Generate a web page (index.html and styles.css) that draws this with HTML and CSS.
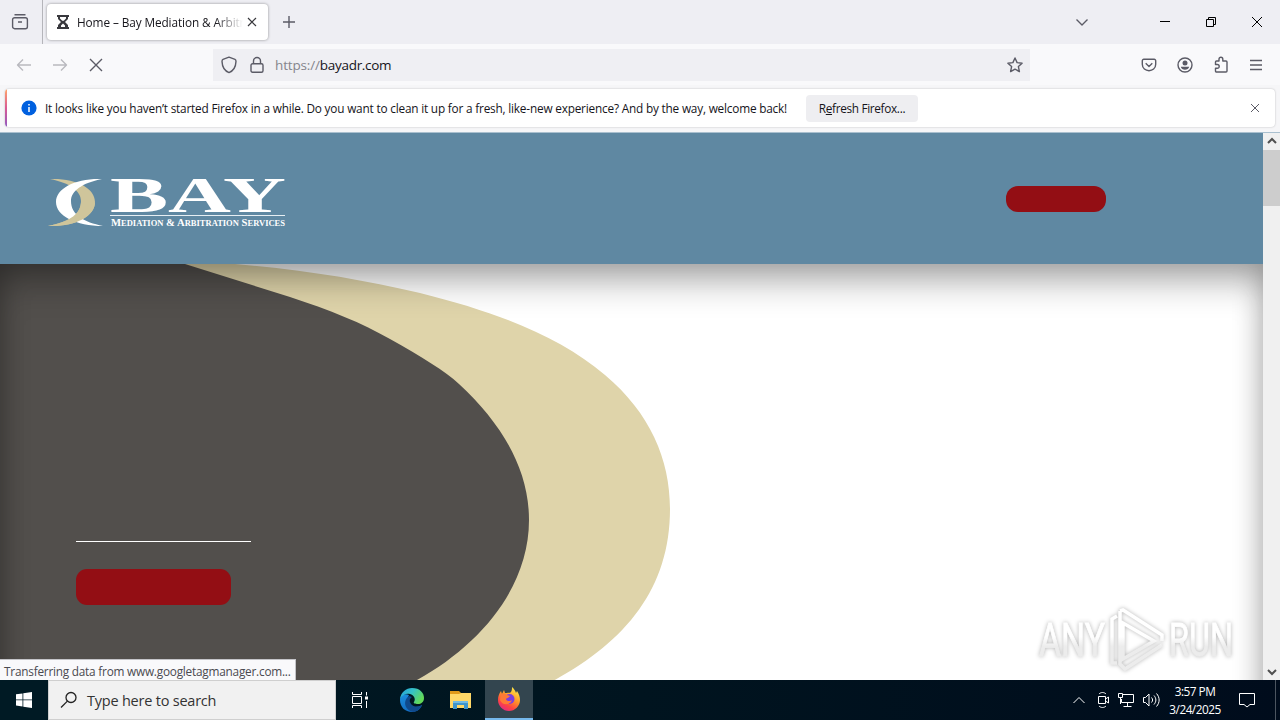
FILE: index.html
```html
<!DOCTYPE html>
<html lang="en">
<head>
    <meta charset="UTF-8">
    <meta name="viewport" content="width=device-width, initial-scale=1.0">
    <title>Home – Bay Mediation &amp; Arbitration</title>
    <link rel="stylesheet" href="styles.css">
</head>
<body>
    <!-- Tab strip -->
    <div class="tab-bar">
        <div class="recent">
            <svg width="18" height="18" viewBox="0 0 18 18" class="icon"><path d="M3.5 1.7h11M3.6 4.7h10.8a2 2 0 0 1 2 2v7a2 2 0 0 1-2 2H3.6a2 2 0 0 1-2-2v-7a2 2 0 0 1 2-2zM7 9h4"/></svg>
        </div>
        <div class="tab">
            <svg width="12" height="14" viewBox="0 0 12 14"><path fill="#38383d" fill-rule="evenodd" d="M0 0h12v2h-1v2L8 7l3 3v2h1v2H0v-2h1v-2l3-3-3-3V2H0zM3 2v1.500l2.200 2.300h1.600L9 3.500V2zM6 8.500l-2 2V12h4v-1.500z"/></svg>
            <span class="tab-title">Home – Bay Mediation &amp; Arbitration</span>
            <svg width="10" height="10" viewBox="0 0 10 10" class="icon dark"><path d="M1 1l8 8M9 1l-8 8"/></svg>
        </div>
        <svg width="14" height="14" viewBox="0 0 14 14" class="icon new-tab"><path d="M7 1v12M1 7h12"/></svg>
        <div class="window-buttons">
            <svg width="14" height="14" viewBox="0 0 14 14" class="icon"><path d="M1.500 4.500L7 10l5.500-5.500"/></svg>
            <svg width="12" height="12" viewBox="0 0 12 12" class="icon black"><path d="M1 5.500h10"/></svg>
            <svg width="12" height="12" viewBox="0 0 12 12" class="icon black"><path d="M1.500 3.500h7v7h-7zM3.500 3.500v-2h7v7h-2"/></svg>
            <svg width="12" height="12" viewBox="0 0 12 12" class="icon black"><path d="M1 1l10 10M11 1L1 11"/></svg>
        </div>
    </div>

    <!-- Navigation toolbar -->
    <div class="toolbar">
        <div class="nav-buttons">
            <svg width="16" height="16" viewBox="0 0 16 16" class="icon faded"><path d="M15 8H1.500M7 2.500L1.500 8 7 13.500"/></svg>
            <svg width="16" height="16" viewBox="0 0 16 16" class="icon faded"><path d="M1 8h13.500M9 2.500L14.500 8 9 13.500"/></svg>
            <svg width="16" height="16" viewBox="0 0 16 16" class="icon"><path d="M2 2l12 12M14 2L2 14"/></svg>
        </div>
        <div class="url-bar">
            <svg width="16" height="18" viewBox="0 0 16 18" class="icon"><path d="M8 1.200l6 2.200c1 .4 1 1 1 2C14.800 10 13.500 14.500 8 16.600 2.500 14.500 1.200 10 1 5.400c0-1 0-1.600 1-2z"/></svg>
            <svg width="14" height="18" viewBox="0 0 14 18" class="icon"><path d="M2.500 7.700h9a1.500 1.500 0 0 1 1.500 1.500v5.600a1.500 1.500 0 0 1-1.500 1.500h-9A1.500 1.500 0 0 1 1 14.800V9.200a1.500 1.500 0 0 1 1.500-1.500zM3.500 7.500V5a3.500 3.500 0 0 1 7 0v2.500"/></svg>
            <span class="url"><span class="scheme">https://</span>bayadr.com</span>
            <svg width="16" height="16" viewBox="0 0 16 16" class="icon star"><path d="M8 1l2.100 4.600 5 .6-3.700 3.400 1 5L8 12.100l-4.400 2.500 1-5L.9 6.200l5-.6z"/></svg>
        </div>
        <div class="toolbar-icons">
            <svg width="16" height="16" viewBox="0 0 16 16" class="icon"><path d="M2.800 2.300h10.400a1.500 1.500 0 0 1 1.500 1.500v3.500c0 8.500-13.400 8.500-13.400 0V3.800a1.500 1.500 0 0 1 1.500-1.500zM4.700 6.300L8 9.400l3.300-3.100"/></svg>
            <svg width="16" height="16" viewBox="0 0 16 16" class="icon"><circle cx="8" cy="8" r="7"/><circle cx="8" cy="5.900" r="2.500" class="solid"/><path class="solid" d="M3.800 9.800h8.400c-.6 3.800-7.800 3.800-8.400 0z"/></svg>
            <svg width="16" height="18" viewBox="0 0 16 18" class="icon"><path d="M6 5V3.200a1.900 1.900 0 0 1 3.800 0V5H13a1 1 0 0 1 1 1v9a1 1 0 0 1-1 1H3.500a1 1 0 0 1-1-1v-2.700h1.800a1.900 1.900 0 0 0 0-3.800H2.500V6a1 1 0 0 1 1-1z"/></svg>
            <svg width="14" height="14" viewBox="0 0 14 14" class="icon"><path d="M1 2.500h12M1 7h12M1 11.500h12"/></svg>
        </div>
    </div>

    <!-- Notification bar -->
    <div class="notice-wrap">
        <div class="notice">
            <svg width="16" height="16" viewBox="0 0 16 16"><circle cx="8" cy="8" r="7.600" fill="#0060df"/><path d="M8 4v1.500M8 7v5" stroke="#fff" stroke-width="1.500"/></svg>
            <span class="notice-text">It looks like you haven’t started Firefox in a while. Do you want to clean it up for a fresh, like-new experience? And by the way, welcome back!</span>
            <button class="refresh">R<u>e</u>fresh Firefox...</button>
            <svg width="10" height="10" viewBox="0 0 10 10" class="icon notice-close"><path d="M1 1l8 8M9 1L1 9"/></svg>
        </div>
    </div>

    <!-- Page -->
    <div class="viewport">
        <div class="page">
            <header class="site-header">
                <svg class="logo" width="240" height="53" viewBox="0 0 240 53">
                    <defs>
                        <clipPath id="lower"><path d="M0 28h60v25H0z"/></clipPath>
                        <path id="crescent" d="M2 4C28 3 47 13 47 27S28 52 0 51C20 47 33 40 33 26 33 16 22 8 2 4z"/>
                    </defs>
                    <use href="#crescent" fill="#cfc59b"/>
                    <path fill="#fff" d="M54 4C28 3 8 13 8 27s20 24 47 24C36 47 23 40 23 26 23 16 34 8 54 4z"/>
                    <use href="#crescent" fill="#cfc59b" clip-path="url(#lower)"/>
                    <text class="logo-name" x="62" y="37" textLength="176" lengthAdjust="spacingAndGlyphs">BAY</text>
                    <path d="M62 40.500h175" stroke="#e6eef3"/>
                    <text class="logo-sub" x="63" y="51" textLength="174" lengthAdjust="spacingAndGlyphs">M<tspan class="sc">EDIATION</tspan> &amp; A<tspan class="sc">RBITRATION</tspan> S<tspan class="sc">ERVICES</tspan></text>
                </svg>
                <div class="header-button"></div>
            </header>
            <section class="hero">
                <svg class="swoosh" width="700" height="436" viewBox="0 0 700 436">
                    <path fill="#dfd4aa" d="M180 0H235C305 6 360 15 420 29C500 49 560 73 605 111C650 149 670 195 670 245C670 325 625 378 553 417L520 436H180z"/>
                    <path fill="#524f4c" d="M0 0H185L290 33C330 46 362 59 390 75C422 93 445 107 459 120C500 158 529 203 529 256C529 322 482 380 417 416L380 436H0z"/>
                </svg>
                <div class="hero-content">
                    <div class="hero-line"></div>
                    <div class="hero-button"></div>
                </div>
            </section>
        </div>
        <div class="scrollbar">
            <svg width="10" height="8" viewBox="0 0 10 8" class="arrow"><path d="M1 6l4-4 4 4"/></svg>
            <div class="thumb"></div>
            <svg width="10" height="8" viewBox="0 0 10 8" class="arrow"><path d="M1 2l4 4 4-4"/></svg>
        </div>
        <div class="status">Transferring data from www.googletagmanager.com...</div>
        <svg class="watermark" width="200" height="66" viewBox="0 0 200 66">
            <defs>
                <linearGradient id="fade" gradientUnits="userSpaceOnUse" x1="0" y1="0" x2="0" y2="66"><stop offset=".45" stop-color="#fff"/><stop offset=".6" stop-color="#ececec"/></linearGradient>
            </defs>
            <text x="2" y="49" textLength="66" lengthAdjust="spacingAndGlyphs">ANY</text>
            <path d="M80 56h-5V12l5-3M83 4l3-1 39 25v6M83 4v53l5 5 37-24M86 16l31 18-31 18z"/>
            <text x="132" y="49" textLength="64" lengthAdjust="spacingAndGlyphs">RUN</text>
        </svg>
    </div>

    <!-- Taskbar -->
    <div class="taskbar">
        <div class="start">
            <svg width="16" height="16" viewBox="0 0 16 16"><path fill="#fff" d="M0 2.300l6.500-.9v6.100H0zM7.300 1.300L16 0v7.500H7.300zM0 8.300h6.500v6.200L0 13.600zM7.300 8.300H16V16l-8.700-1.300z"/></svg>
        </div>
        <div class="search">
            <svg width="18" height="18" viewBox="0 0 18 18" class="icon search-icon"><circle cx="11" cy="6.500" r="5"/><path d="M7.400 10.100L1 16.500"/></svg>
            <span>Type here to search</span>
        </div>
        <div class="task task-view">
            <svg width="18" height="16" viewBox="0 0 18 16" class="icon white"><path d="M1.500 4.500h9v7h-9zM1.500 0v2.500h9V0M1.500 16v-2.500h9V16M15.500 0v3.500M15.500 9v7"/><path d="M14 4.500h3v3h-3z" fill="#fff" stroke="none"/></svg>
        </div>
        <div class="task">
            <svg width="26" height="26" viewBox="0 0 26 26">
                <defs>
                    <linearGradient id="edgeTop" x1="0" y1="0" x2="1" y2=".5"><stop offset="0" stop-color="#249edb"/><stop offset=".5" stop-color="#35c1c8"/><stop offset="1" stop-color="#63d957"/></linearGradient>
                    <linearGradient id="edgeLow" x1="0" y1="0" x2=".5" y2="1"><stop offset="0" stop-color="#1b8fe0"/><stop offset="1" stop-color="#1269bd"/></linearGradient>
                </defs>
                <path fill="url(#edgeLow)" d="M1 13C1 8 6 6 10 8c-3 4-1 12 6 12 3 0 5-1 7-2-2 5-6 7-10 7C6 25 1 20 1 13z"/>
                <path fill="#104a8c" d="M10 9c-7 5-4 15 5 16 4-1 7-4 8-7-3 2-7 2-10 0-3-3-3-6 0-8z"/>
                <path fill="url(#edgeTop)" d="M1 12C2 5 7 1 13 1c8 0 12 5 12 10 0 4-3 6-6 6-3 0-5-1-4-2 2-3 0-7-4-8C7 6 3 8 1 12z"/>
            </svg>
        </div>
        <div class="task">
            <svg width="22" height="20" viewBox="0 0 22 20">
                <path fill="#e09a1a" d="M0 1h9l2 2v3H0z"/>
                <path fill="#ffd868" d="M0 4h9l2-1h10v15H0z"/>
                <path fill="#3f95cc" d="M3 11h15v8h-4v-4H7v4H3z"/>
                <path fill="#72bbe4" d="M3 11h15v2H3z"/>
            </svg>
        </div>
        <div class="task active">
            <svg width="24" height="24" viewBox="0 0 24 24">
                <defs><linearGradient id="fox" x1=".8" y1="0" x2=".25" y2="1"><stop offset="0" stop-color="#fff14a"/><stop offset=".45" stop-color="#ff9428"/><stop offset=".75" stop-color="#ff4343"/><stop offset="1" stop-color="#e02888"/></linearGradient></defs>
                <path fill="url(#fox)" d="M15 0c2 2 3 3 4 6l1-2c2 3 3 6 3 9 0 6-5 11-11 11S1 19 1 13c0-4 1-6 3-9l1 3 2-4 1 3c3 0 5 0 6-1 1-2 1-3 1-5z"/>
                <circle cx="12.500" cy="12" r="5" fill="#7a3ee0"/>
                <path fill="#ff7a36" d="M4 7c3-1 5 0 6 1l3 1c-1 2-4 2-4 3 0 2 4 3 6 1-1 5-10 6-12 0z"/>
            </svg>
        </div>
        <div class="tray">
            <svg width="14" height="10" viewBox="0 0 14 10" class="icon white"><path d="M1.500 8L7 2.500 12.500 8"/></svg>
            <svg width="14" height="18" viewBox="0 0 14 18" class="icon white"><path d="M2.500 5.500h7v7h-7zM9.500 8l3-2v6l-3-2M3 3c2-2 5-2 7 0M3 15c2 2 5 2 7 0"/></svg>
            <svg width="18" height="16" viewBox="0 0 18 16" class="icon white"><path d="M6 2.500h10.500v8H4.500V7M10.500 10.500v4M6.500 14.500h8M1.500 1.500h4v4h-4zM3.500 5.500V12"/></svg>
            <svg width="18" height="16" viewBox="0 0 18 16" class="icon white"><path d="M1.500 5.500h2L7 2v12l-3.500-3.500h-2zM9.500 5.500c1.500 2 1.500 3 0 5M12 3.500c2.500 3 2.500 6 0 9M14.500 1.500c3.500 4 3.500 9 0 13"/></svg>
        </div>
        <div class="clock"><span>3:57 PM</span><span>3/24/2025</span></div>
        <svg width="18" height="18" viewBox="0 0 18 18" class="icon white action"><path d="M1.500 2.500h15v11H12L9 16l-3-2.500H1.500z"/></svg>
        <div class="show-desktop"></div>
    </div>
</body>
</html>
```
FILE: styles.css
```css
/* General Reset */
* {
    margin: 0;
    padding: 0;
    box-sizing: border-box;
}

body {
    width: 1280px;
    height: 720px;
    display: flex;
    flex-direction: column;
    overflow: hidden;
    font-family: "Open Sans", "Noto Sans", sans-serif;
    font-size: 11.8px;
    letter-spacing: -0.22px;
    color: #15141a;
    background: #f9f9fb;
}

svg {
    display: block;
    flex: none;
}

/* Line icons */
.icon {
    fill: none;
    stroke: #5b5b66;
    stroke-width: 1.4;
    stroke-linejoin: round;
}

.icon .solid {
    fill: #5b5b66;
    stroke: none;
}

.icon.dark {
    stroke: #38383d;
    stroke-width: 1.2;
}

.icon.black {
    stroke: #000;
    stroke-width: 1;
}

.icon.faded {
    stroke: #b9b9bf;
}

.icon.white {
    stroke: #fff;
    stroke-width: 1;
}

/* Tab strip */
.tab-bar {
    height: 44px;
    flex: none;
    display: flex;
    align-items: center;
    background: #eeeef3;
}

.recent {
    width: 43px;
    height: 44px;
    padding-left: 11px;
    display: flex;
    align-items: center;
    border-right: 1px solid #b5b5ba;
}

.tab {
    width: 221px;
    height: 36px;
    margin-left: 4px;
    padding: 0 11px 0 10px;
    display: flex;
    align-items: center;
    background: #fff;
    border-radius: 4px;
    box-shadow: 0 0 3px rgba(0, 0, 0, 0.4);
}

.tab-title {
    width: 166px;
    margin: 0 4px 0 8px;
    overflow: hidden;
    white-space: nowrap;
    letter-spacing: -0.1px;
    -webkit-mask-image: linear-gradient(to left, transparent, #000 28px);
    mask-image: linear-gradient(to left, transparent, #000 28px);
}

.new-tab {
    margin-left: 14px;
}

.window-buttons {
    margin-left: auto;
    display: flex;
    align-items: center;
    gap: 34px;
    padding-right: 17px;
}

.window-buttons svg:first-child {
    margin-right: 36px;
}

/* Toolbar */
.toolbar {
    height: 41px;
    flex: none;
    display: flex;
    align-items: center;
    background: #f9f9fb;
}

.nav-buttons {
    width: 213px;
    padding-left: 16px;
    display: flex;
    gap: 20px;
}

.url-bar {
    width: 817px;
    height: 32px;
    padding: 0 7px 0 8px;
    display: flex;
    align-items: center;
    gap: 13px;
    background: #efeff3;
}

.url {
    margin-left: -2px;
    font-size: 13.5px;
    letter-spacing: -0.3px;
}

.scheme {
    color: #85858c;
    letter-spacing: -0.15px;
}

.star {
    margin-left: auto;
}

.toolbar-icons {
    margin-left: auto;
    padding-right: 17px;
    display: flex;
    align-items: center;
    gap: 20px;
}

/* Notification */
.notice-wrap {
    height: 48px;
    flex: none;
    padding: 4px 5px 5px;
    background: #f6f6f8;
    border-bottom: 1px solid #aac0cf;
}

.notice {
    position: relative;
    height: 38px;
    padding: 0 15px 0 16px;
    display: flex;
    align-items: center;
    background: #fff;
    border-radius: 4px;
    box-shadow: 0 0 2px rgba(0, 0, 0, 0.25);
    overflow: hidden;
}

.notice::before {
    content: "";
    position: absolute;
    left: 0;
    top: 0;
    width: 2px;
    height: 100%;
    background: linear-gradient(#ffa56a, #d95a94 50%, #9059c0);
}

.notice-text {
    width: 742px;
    margin-left: 8px;
    white-space: nowrap;
    letter-spacing: -0.19px;
}

.refresh {
    width: 112px;
    height: 27px;
    margin-left: 19px;
    border: none;
    border-radius: 4px;
    background: #eeeef1;
    color: #15141a;
    font: inherit;
    letter-spacing: -0.33px;
}

.notice-close {
    margin-left: auto;
    stroke-width: 1;
}

/* Page area */
.viewport {
    position: relative;
    height: 547px;
    flex: none;
    display: flex;
    overflow: hidden;
}

.page {
    width: 1263px;
}

.site-header {
    height: 131px;
    padding: 0 157px 0 48px;
    display: flex;
    align-items: center;
    justify-content: space-between;
    background: #5f88a2;
}

.logo {
    margin-top: 6px;
    overflow: visible;
    letter-spacing: 0;
}

.logo-name {
    font: bold 50px "Liberation Serif", serif;
    fill: #fff;
}

.logo-sub {
    font: bold 10px "Liberation Serif", serif;
    fill: #fff;
}

.sc {
    font-size: 8px;
}

.header-button {
    width: 100px;
    height: 26px;
    border-radius: 12px;
    background: #930e14;
}

.hero {
    position: relative;
    height: 620px;
    background: #fff;
}

.hero::after {
    content: "";
    position: absolute;
    inset: 0;
    box-shadow: inset 0 0 30px rgba(0, 0, 0, 0.3), inset 0 30px 32px -8px rgba(0, 0, 0, 0.22);
}

.swoosh {
    position: absolute;
    left: 0;
    top: 0;
}

.hero-content {
    position: relative;
    padding: 277px 0 0 76px;
}

.hero-line {
    width: 175px;
    height: 1px;
    background: #fff;
}

.hero-button {
    width: 155px;
    height: 36px;
    margin-top: 27px;
    border-radius: 11px;
    background: #930e14;
}

/* Scrollbar */
.scrollbar {
    width: 17px;
    padding: 4px 0;
    display: flex;
    flex-direction: column;
    align-items: center;
    background: #f0f0f0;
}

.thumb {
    width: 17px;
    height: 56px;
    margin: 5px 0 auto;
    background: #cdcdcd;
}

.arrow {
    fill: none;
    stroke: #505050;
    stroke-width: 2;
}

/* Overlays on the page */
.status {
    position: absolute;
    left: 0;
    bottom: 0;
    width: 296px;
    height: 21px;
    padding-left: 4px;
    line-height: 22px;
    white-space: nowrap;
    color: #4a4a50;
    background: #f9f9fb;
    border: 1px solid #c4c4c8;
    border-width: 1px 1px 0 0;
}

.watermark {
    position: absolute;
    left: 1037px;
    top: 474px;
    overflow: visible;
    letter-spacing: 0;
    filter: drop-shadow(0 0 2px rgba(0, 0, 0, 0.3));
}

.watermark text {
    font: 46px "Roboto", sans-serif;
    fill: url(#fade);
    stroke: url(#fade);
    stroke-width: 0.8;
}

.watermark path {
    fill: none;
    stroke: url(#fade);
    stroke-width: 3.5;
}

/* Taskbar */
.taskbar {
    height: 40px;
    flex: none;
    display: flex;
    align-items: center;
    background: linear-gradient(90deg, #001a24, #00141f 50%, #000c1c);
}

.start,
.task {
    width: 48px;
    height: 40px;
    display: flex;
    align-items: center;
    justify-content: center;
}

.start {
    background: #001a24;
}

.task {
    width: 49px;
}

.task-view {
    width: 48px;
    margin-right: 3px;
}

.task.active {
    width: 48px;
    background: #33454f;
    border-bottom: 2px solid #76b9ed;
}

.search {
    width: 288px;
    height: 40px;
    padding-left: 11px;
    display: flex;
    align-items: center;
    gap: 9px;
    background: #f1f1f1;
    border: 1px solid #cfcfcf;
    font-size: 14.5px;
    color: #333;
}

.search-icon {
    stroke: #222;
    stroke-width: 1.3;
}

.tray {
    margin-left: auto;
    display: flex;
    align-items: center;
    gap: 7px;
}

.tray svg:first-child {
    margin-right: 3px;
}

.clock {
    width: 70px;
    display: flex;
    flex-direction: column;
    align-items: center;
    line-height: 18px;
    letter-spacing: -0.5px;
    color: #fff;
}

.action {
    margin-left: 8px;
}

.show-desktop {
    width: 5px;
    height: 40px;
    margin-left: 19px;
    border-left: 1px solid #4c5560;
}
```
